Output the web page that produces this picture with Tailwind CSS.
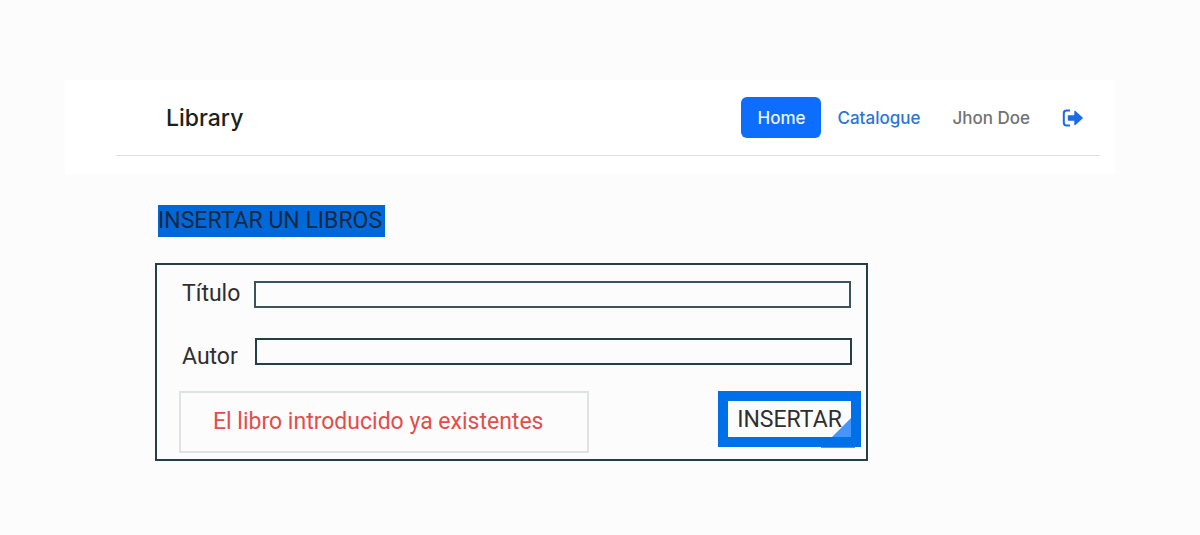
<!DOCTYPE html>
<html lang="es">
<head>
<meta charset="utf-8">
<meta name="viewport" content="width=device-width, initial-scale=1">
<title>Library</title>
<script src="https://cdn.jsdelivr.net/npm/@tailwindcss/browser@4"></script>
</head>
<body class="min-h-screen bg-[#fcfcfc] pt-20 pb-16 font-['Roboto',sans-serif] text-[#2f2f2f]">
  <header class="ml-[65px] mr-[85px] bg-white pb-[18px] pl-[51px] pr-[15px] font-['Inter',sans-serif]">
    <div class="flex items-center justify-between border-b border-[#dfdfdf] py-[17px] pl-[50px]">
      <a href="#" class="text-[23px] leading-10 font-medium text-[#1c1f22]">Library</a>
      <nav class="flex items-center text-[17px] leading-[25px] font-medium">
        <a href="#" class="rounded-md bg-[#0d6efd] px-4 pt-[9px] pb-[7px] text-[#eaf3ff]">Home</a>
        <a href="#" class="px-4 pt-[9px] pb-[7px] text-[#2a75d8]">Catalogue</a>
        <span class="px-4 pt-[9px] pb-[7px] text-[#707274]">Jhon Doe</span>
        <a href="#" aria-label="Salir" class="px-4 py-2 text-[#1b6ae6]">
          <svg class="h-5 w-[22px]" viewBox="0 0 22 20" fill="none">
            <path d="M8 2.5H4.5Q1.8 2.5 1.8 5.2V14.8Q1.8 17.5 4.5 17.5H8" stroke="currentColor" stroke-width="2"/>
            <path d="M6.5 7.2H12.3V3.4Q12.5 2.4 13.5 3.1L20.6 9.4Q21.2 10 20.6 10.6L13.5 16.9Q12.5 17.6 12.3 16.6V12.8H6.5Q5.8 12.8 5.8 12.1V7.9Q5.8 7.2 6.5 7.2Z" fill="currentColor"/>
          </svg>
        </a>
      </nav>
    </div>
  </header>

  <main class="ml-[155px] mr-8 pt-[31px]">
    <h1 class="ml-[3px] w-fit bg-[#0068d9] pr-[3px] text-[23px] leading-8 whitespace-nowrap text-[#17293f]">INSERTAR UN LIBROS</h1>

    <form class="mt-[26px] max-w-[713px] border-2 border-[#243f49] pt-4 pr-[5px] pb-[6px] pl-[22px] text-[23px]">
      <div class="mr-[10px] flex items-start">
        <label for="titulo" class="w-[75px] pl-[3px] leading-[25px]">Título</label>
        <input id="titulo" type="text" class="h-[27px] min-w-0 flex-1 border-2 border-[#3a535c] px-2 text-base outline-none">
      </div>
      <div class="mr-[9px] mt-[30px] flex items-start">
        <label for="autor" class="w-[76px] pt-[5px] pl-[3px] leading-7">Autor</label>
        <input id="autor" type="text" class="h-[27px] min-w-0 flex-1 border-2 border-[#243f49] px-2 text-base outline-none">
      </div>
      <div class="mt-5 flex items-start justify-between">
        <p role="alert" class="w-[410px] border-2 border-[#dfe2e2] pl-8 py-[14px] leading-[30px] whitespace-nowrap text-[#e54c4c]">El libro introducido ya existentes</p>
        <button type="button" class="relative h-14 w-[143px] border-10 border-[#0070e8] pt-px leading-9 whitespace-nowrap">
          <span class="relative z-10">INSERTAR</span>
          <svg class="absolute right-0 bottom-0 h-[19px] w-[19px]" viewBox="0 0 19 19" aria-hidden="true"><path d="M19 0V19H0Z" fill="#4595fa"/></svg>
          <svg class="absolute -right-1 -bottom-[11px] h-px w-[34px]" viewBox="0 0 34 1" aria-hidden="true"><path d="M0 0H34V1H0Z" fill="#4595fa"/></svg>
        </button>
      </div>
    </form>
  </main>
</body>
</html>
